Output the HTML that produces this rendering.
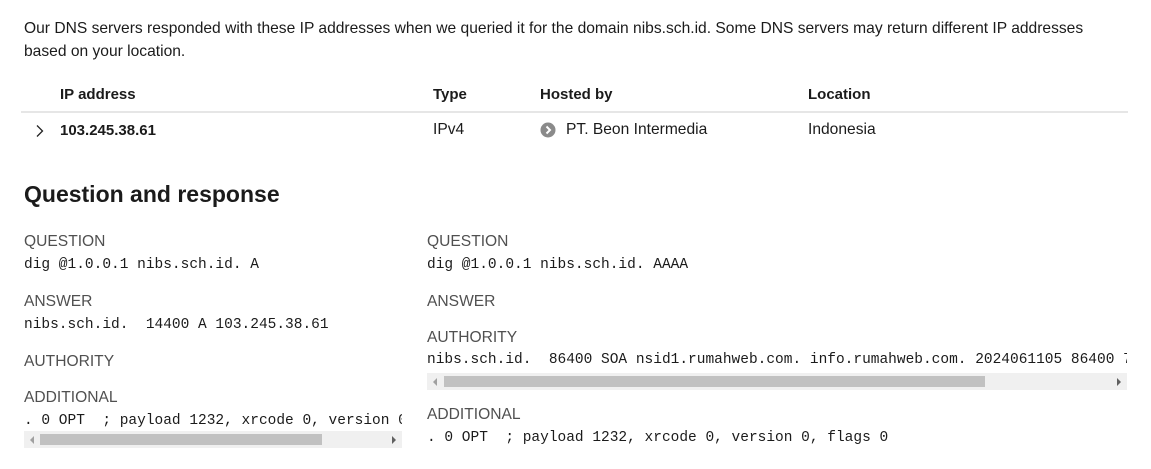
<!DOCTYPE html><html><head><style>
body{margin:0;width:1151px;height:469px;background:#fff;font-family:"Liberation Sans",sans-serif;color:#1b1b1b;position:relative;overflow:hidden}
.a{position:absolute;white-space:pre}
.p{font-size:15.6px;line-height:23px;left:24px;top:17px}
.h{font-size:15px;font-weight:bold}
.t{font-size:15.6px}
.l{font-size:15.6px;color:#505050;text-transform:uppercase}
.m{font-family:"Liberation Mono",monospace;font-size:14.5px;overflow:hidden}
.sb{position:absolute;height:17px;background:#f0f0f0}
.th{position:absolute;top:3px;height:11px;background:#c1c1c1}
.ar{position:absolute;top:5px;width:0;height:0;border-top:4px solid transparent;border-bottom:4px solid transparent}
</style></head><body>
<div class="a p">Our DNS servers responded with these IP addresses when we queried it for the domain nibs.sch.id. Some DNS servers may return different IP addresses
based on your location.</div>
<div class="a h" style="left:60px;top:86px">IP address</div>
<div class="a h" style="left:433px;top:86px">Type</div>
<div class="a h" style="left:540px;top:86px">Hosted by</div>
<div class="a h" style="left:808px;top:86px">Location</div>
<div class="a" style="left:21px;top:111px;width:1107px;height:2px;background:#e6e6e6"></div>
<svg class="a" style="left:35px;top:124px" width="10" height="14"><path d="M2 1.5 L7.5 7 L2 12.5" fill="none" stroke="#222" stroke-width="1.3"/></svg>
<div class="a h" style="left:60px;top:122px">103.245.38.61</div>
<div class="a t" style="left:433px;top:121px">IPv4</div>
<svg class="a" style="left:540px;top:122px" width="16" height="16"><circle cx="8" cy="8" r="7.5" fill="#8a8a8a"/><path d="M6.5 4.5 L10 8 L6.5 11.5" fill="none" stroke="#fff" stroke-width="2"/></svg>
<div class="a t" style="left:566px;top:121px">PT. Beon Intermedia</div>
<div class="a t" style="left:808px;top:121px">Indonesia</div>
<div class="a" style="left:24px;top:181px;font-size:23px;font-weight:bold">Question and response</div>

<div class="a l" style="left:24px;top:233px">Question</div>
<div class="a m" style="left:24px;top:257px">dig @1.0.0.1 nibs.sch.id. A</div>
<div class="a l" style="left:24px;top:293px">Answer</div>
<div class="a m" style="left:24px;top:317px">nibs.sch.id.  14400 A 103.245.38.61</div>
<div class="a l" style="left:24px;top:353px">Authority</div>
<div class="a l" style="left:24px;top:389px">Additional</div>
<div class="a m" style="left:24px;top:413px;width:378px">. 0 OPT  ; payload 1232, xrcode 0, version 0, flags 0</div>
<div class="sb" style="left:24px;top:431px;width:378px"><div class="th" style="left:16px;width:282px"></div><div class="ar" style="left:6px;border-right:4px solid #a0a0a0"></div><div class="ar" style="right:6px;border-left:4px solid #606060"></div></div>

<div class="a l" style="left:427px;top:233px">Question</div>
<div class="a m" style="left:427px;top:257px">dig @1.0.0.1 nibs.sch.id. AAAA</div>
<div class="a l" style="left:427px;top:293px">Answer</div>
<div class="a l" style="left:427px;top:329px">Authority</div>
<div class="a m" style="left:427px;top:352px;width:700px">nibs.sch.id.  86400 SOA nsid1.rumahweb.com. info.rumahweb.com. 2024061105 86400 7200</div>
<div class="sb" style="left:427px;top:373px;width:700px"><div class="th" style="left:17px;width:541px"></div><div class="ar" style="left:6px;border-right:4px solid #a0a0a0"></div><div class="ar" style="right:6px;border-left:4px solid #606060"></div></div>
<div class="a l" style="left:427px;top:406px">Additional</div>
<div class="a m" style="left:427px;top:430px">. 0 OPT  ; payload 1232, xrcode 0, version 0, flags 0</div>
</body></html>
